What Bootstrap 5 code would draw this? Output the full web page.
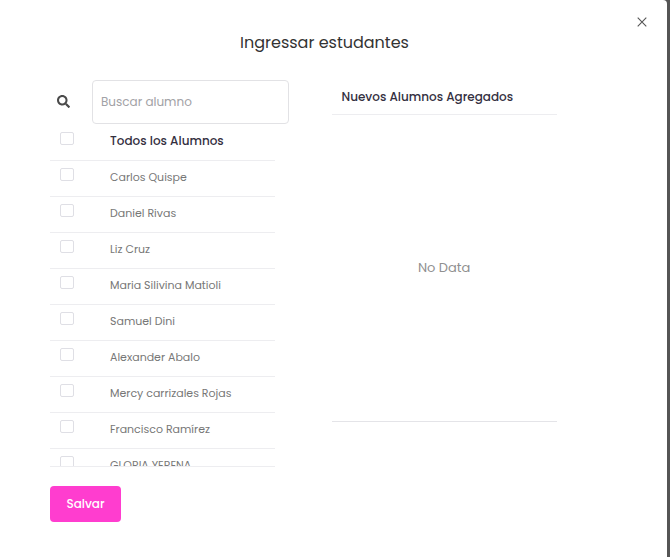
<!DOCTYPE html>
<html lang="es">
<head>
<meta charset="utf-8">
<meta name="viewport" content="width=device-width, initial-scale=1">
<title>Ingressar estudantes</title>
<link href="https://cdn.jsdelivr.net/npm/bootstrap@5.3.0/dist/css/bootstrap.min.css" rel="stylesheet">
<style>
body { background: #555; font-family: Poppins, Inter, sans-serif; font-size: 11px; color: #777; }
.dialog-panel { min-height: 100vh; margin-right: 3px; background: #fff; border-top-right-radius: 4px; }
.dialog-top { padding: 15px 18px 0; }
.close-btn { width: 14px; height: 14px; color: #555; }
.dialog-title { font-size: 16px; line-height: 28px; color: #333; padding-right: 18px; }
.dialog-body { padding: 23px 54px 35px 50px; }
.search-row { width: 85%; }
.search-label { width: 42px; padding: 0 0 3px 7px; color: #4a4a4a; }
.search-box { height: 44px; padding: 0 8px; font-size: 12px; border-color: #e2e2e5; border-radius: 4px; color: #555; }
.search-box::placeholder { color: #a2a2a6; }
.list-scroll { width: 80%; height: 343px; overflow-y: auto; scrollbar-width: none; border-bottom: 1px solid #ededf0; }
.list-scroll::-webkit-scrollbar { display: none; }
.student-table { line-height: 18px; }
.student-table > tbody > tr > *, .student-table > thead > tr > * { height: 36px; padding: 8px 0 9px; border-bottom: 1px solid #ededf0; color: #777; vertical-align: top; white-space: nowrap; }
.student-table > tbody > tr > td { padding-top: 7px; }
.student-table > thead > tr > th { color: #34303f; font-size: 12px; font-weight: 500; }
.student-table > tbody > tr > .pick-cell, .student-table > thead > tr > .pick-cell { width: 60px; padding: 7px 0 0 10px; line-height: 0; }
.student-table > thead > tr > .pick-cell { padding-top: 8px; }
.student-table .form-check-input { width: 14px; height: 13px; margin: 0; border-color: #dfdfe5; border-radius: 2px; }
.added-panel { width: 80%; border-bottom: 1px solid #e4e4e8; height: 342px; }
.added-head { padding: 8px 10px; line-height: 18px; font-size: 12px; font-weight: 500; color: #34303f; border-bottom: 1px solid #ededf0; }
.empty-text { font-size: 13px; color: #909090; }
.save-btn { margin-top: 19px; width: 71px; height: 36px; padding: 0; background: #ff3dcf; border: 0; border-radius: 4px; color: #fff; font-size: 12px; font-weight: 500; }
.save-btn:hover { background: #e82fba; color: #fff; }
</style>
<script src="https://cdn.jsdelivr.net/npm/bootstrap@5.3.0/dist/js/bootstrap.bundle.min.js" defer></script>
</head>
<body>
<main class="dialog-panel" role="dialog" aria-labelledby="dialog-title">
  <div class="dialog-top">
    <div class="d-flex justify-content-end">
      <button type="button" class="close-btn btn p-0 border-0 d-flex align-items-center justify-content-center" aria-label="Cerrar">
        <svg width="10" height="10" viewBox="0 0 10 10" fill="none" stroke="currentColor" stroke-width="1.1"><path d="M.7.7l8.600 8.600M9.300.7L.7 9.300"/></svg>
      </button>
    </div>
    <h1 class="dialog-title text-center fw-normal mb-0" id="dialog-title">Ingressar estudantes</h1>
  </div>
  <div class="dialog-body">
    <div class="row g-0">
      <section class="col-6">
        <div class="search-row d-flex align-items-center">
          <label class="search-label flex-shrink-0" for="search" aria-label="Buscar">
            <svg width="13" height="13" viewBox="0 0 512 512" fill="currentColor"><path d="M505 442.700 405.300 343c-4.500-4.500-10.600-7-17-7H372c27.600-35.300 44-79.700 44-128C416 93.100 322.900 0 208 0S0 93.100 0 208s93.100 208 208 208c48.300 0 92.700-16.400 128-44v16.300c0 6.400 2.500 12.500 7 17l99.700 99.700c9.400 9.400 24.600 9.400 33.900 0l28.300-28.300c9.400-9.400 9.400-24.600.1-34zM208 336c-70.700 0-128-57.200-128-128 0-70.700 57.200-128 128-128 70.700 0 128 57.200 128 128 0 70.700-57.200 128-128 128z"/></svg>
          </label>
          <input type="text" class="search-box form-control" id="search" placeholder="Buscar alumno">
        </div>
        <div class="list-scroll">
          <table class="student-table table mb-0">
            <thead>
              <tr><td class="pick-cell"><input class="form-check-input" type="checkbox" id="s0"></td><th scope="col"><label for="s0">Todos los Alumnos</label></th></tr>
            </thead>
            <tbody>
              <tr><td class="pick-cell"><input class="form-check-input" type="checkbox" id="s1"></td><td><label for="s1">Carlos Quispe</label></td></tr>
              <tr><td class="pick-cell"><input class="form-check-input" type="checkbox" id="s2"></td><td><label for="s2">Daniel Rivas</label></td></tr>
              <tr><td class="pick-cell"><input class="form-check-input" type="checkbox" id="s3"></td><td><label for="s3">Liz Cruz</label></td></tr>
              <tr><td class="pick-cell"><input class="form-check-input" type="checkbox" id="s4"></td><td><label for="s4">Maria Silivina Matioli</label></td></tr>
              <tr><td class="pick-cell"><input class="form-check-input" type="checkbox" id="s5"></td><td><label for="s5">Samuel Dini</label></td></tr>
              <tr><td class="pick-cell"><input class="form-check-input" type="checkbox" id="s6"></td><td><label for="s6">Alexander Abalo</label></td></tr>
              <tr><td class="pick-cell"><input class="form-check-input" type="checkbox" id="s7"></td><td><label for="s7">Mercy carrizales Rojas</label></td></tr>
              <tr><td class="pick-cell"><input class="form-check-input" type="checkbox" id="s8"></td><td><label for="s8">Francisco Ramírez</label></td></tr>
              <tr><td class="pick-cell"><input class="form-check-input" type="checkbox" id="s9"></td><td><label for="s9">GLORIA YERENA</label></td></tr>
            </tbody>
          </table>
        </div>
      </section>
      <section class="col-6">
        <div class="added-panel d-flex flex-column">
          <h2 class="added-head mb-0">Nuevos Alumnos Agregados</h2>
          <div class="empty-text flex-grow-1 d-flex align-items-center justify-content-center">No Data</div>
        </div>
      </section>
    </div>
    <button type="button" class="save-btn btn">Salvar</button>
  </div>
</main>
</body>
</html>
